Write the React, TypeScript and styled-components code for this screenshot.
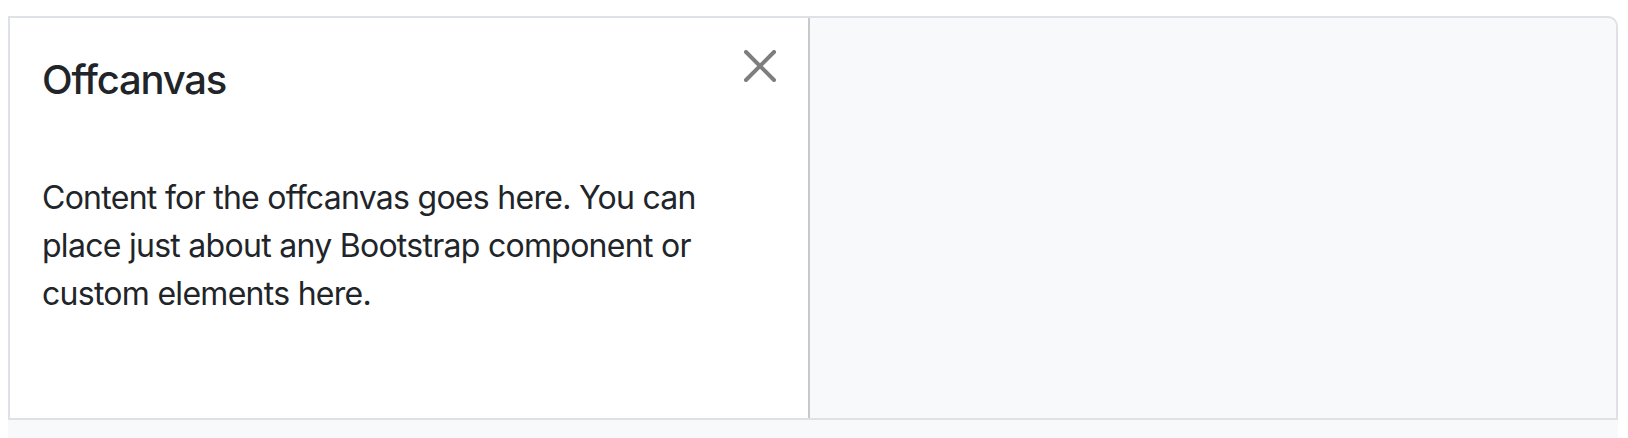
import styled, { createGlobalStyle } from 'styled-components';

const GlobalStyle = createGlobalStyle`
  html, body {
    margin: 0;
    padding: 0;
    background: #ffffff;
  }
  body {
    font-family: Inter, "Noto Sans", "Liberation Sans", sans-serif;
    color: #212529;
    -webkit-font-smoothing: antialiased;
  }
`;

const Page = styled.div`
  padding: 16px 10px 0 8px;
`;

const Example = styled.div`
  display: flex;
  height: 400px;
  border: 2px solid #dee2e6;
  border-top-right-radius: 10px;
  background: #f8f9fa;
  overflow: hidden;
`;

const Offcanvas = styled.div`
  display: flex;
  flex-direction: column;
  width: 798px;
  flex-shrink: 0;
  background: #ffffff;
  border-right: 2px solid #c8c9ca;
`;

const Header = styled.div`
  display: flex;
  align-items: flex-start;
  justify-content: space-between;
  padding: 32px;
`;

const Title = styled.h5`
  margin: 0;
  font-size: 40px;
  line-height: 60px;
  font-weight: 500;
  letter-spacing: -1.2px;
`;

const CloseButton = styled.button`
  display: flex;
  width: 32px;
  height: 32px;
  padding: 0;
  border: 0;
  background: transparent;
  opacity: 0.5;
  cursor: pointer;
`;

const Body = styled.div`
  padding: 32px;
  font-size: 32px;
  line-height: 48px;
  letter-spacing: -0.72px;
`;

const CodeStrip = styled.div`
  height: 18px;
  background: #f8f9fa;
`;

export default function App() {
  return (
    <>
      <GlobalStyle />
      <Page>
        <Example>
          <Offcanvas>
            <Header>
              <Title>Offcanvas</Title>
              <CloseButton aria-label="Close">
                <svg width="32" height="32" viewBox="0 0 16 16" fill="#000">
                  <path d="M.293.293a1 1 0 0 1 1.414 0L8 6.586 14.293.293a1 1 0 1 1 1.414 1.414L9.414 8l6.293 6.293a1 1 0 0 1-1.414 1.414L8 9.414l-6.293 6.293a1 1 0 0 1-1.414-1.414L6.586 8 .293 1.707a1 1 0 0 1 0-1.414z" />
                </svg>
              </CloseButton>
            </Header>
            <Body>
              Content for the offcanvas goes here. You can place just about any Bootstrap component or custom elements here.
            </Body>
          </Offcanvas>
        </Example>
        <CodeStrip />
      </Page>
    </>
  );
}
